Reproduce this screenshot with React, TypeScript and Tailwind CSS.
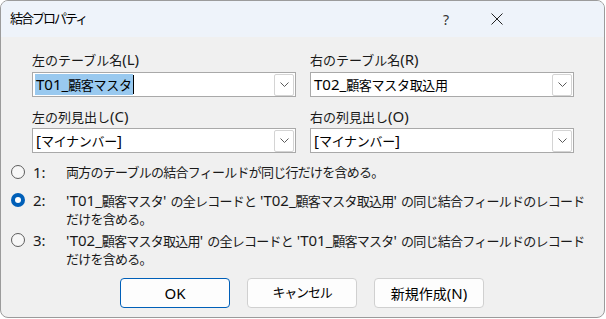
import React from 'react';

const font = { fontFamily: '"Noto Sans", "Noto Sans CJK JP", sans-serif' };

// Latin runs are rendered a bit larger than the Japanese runs, like the Windows UI font pairing
const Mix = ({ text, cjk = '', lat = 'text-[15px]' }: { text: string; cjk?: string; lat?: string }) => (
  <>
    {text.split(/([\x20-\x7e]+)/).map((part, i) =>
      part === '' ? null : /^[\x20-\x7e]+$/.test(part) ? (
        <span key={i} className={`whitespace-pre ${lat}`}>
          {part}
        </span>
      ) : (
        <span key={i} className={cjk}>
          {part}
        </span>
      )
    )}
  </>
);

const Chevron = () => (
  <svg width="9" height="5" viewBox="0 0 9 5" fill="none">
    <path d="M0.5 0.5 L4.5 4.5 L8.5 0.5" stroke="#5a5a5a" strokeWidth="1" />
  </svg>
);

const Combo = ({ value, selected }: { value: string; selected?: boolean }) => (
  <div className="flex h-[25px] items-center border border-[#a9a9a9] bg-white pl-[2px] pr-[1px]">
    <div className="flex flex-1 items-center">
      <span className={`px-[1px] leading-[20px] text-black ${selected ? 'bg-[#99c9ef]' : ''}`}>
        <Mix text={value} cjk="tracking-[-0.3px]" />
      </span>
      {selected && <span className="h-[19px] w-[1px] bg-black" />}
    </div>
    <div className="flex h-[22px] w-[20px] items-center justify-center rounded-[2px] border border-[#d4d4d4] bg-white">
      <Chevron />
    </div>
  </div>
);

const Radio = ({ checked }: { checked?: boolean }) =>
  checked ? (
    <span className="flex h-[14px] w-[14px] items-center justify-center rounded-full bg-[#005fb8]">
      <span className="h-[6px] w-[6px] rounded-full bg-white" />
    </span>
  ) : (
    <span className="h-[14px] w-[14px] rounded-full border border-[#5d5d5d] bg-[#f7f7f7]" />
  );

const Option = ({ n, checked, lines }: { n: string; checked?: boolean; lines: string[] }) => (
  <div className="flex pl-[10px] leading-[18px]">
    <div className="flex h-[18px] w-[22px] items-center">
      <Radio checked={checked} />
    </div>
    <div className="w-[33px] text-[15px]">{n}</div>
    <div className="flex flex-col">
      {lines.map((l) => (
        <span key={l}>
          <Mix text={l} cjk="tracking-[-0.75px]" />
        </span>
      ))}
    </div>
  </div>
);

const Label = ({ text }: { text: string }) => (
  <div className="h-[20px] leading-[20px]">
    <Mix text={text} lat="text-[15px]" />
  </div>
);

export default function App() {
  return (
    <div className="h-[319px] w-[606px] bg-white text-[13px] text-[#1a1a1a]" style={font}>
      <div className="flex h-[318px] w-[605px] flex-col overflow-hidden rounded-[8px] border border-[#9b9b9b] bg-[#f0f0f0]">
        {/* title bar */}
        <div className="flex h-[36px] items-center bg-[#eef3fa] pl-[9px]">
          <span className="flex-1 text-[13px] tracking-[-2px] text-black">結合プロパティ</span>
          <span className="mr-[42px] text-[14px] text-[#333]">?</span>
          <svg width="12" height="12" viewBox="0 0 12 12" className="mr-[101px]">
            <path d="M0.5 0.5 L11.5 11.5 M11.5 0.5 L0.5 11.5" stroke="#222" strokeWidth="1" />
          </svg>
        </div>

        {/* table pickers */}
        <div className="grid grid-cols-2 gap-x-[14px] pl-[31px] pr-[30px] pt-[12px]">
          <div className="flex flex-col">
            <Label text="左のテーブル名(L)" />
            <div className="mt-[3px]">
              <Combo value="T01_顧客マスタ" selected />
            </div>
            <div className="mt-[9px]">
              <Label text="左の列見出し(C)" />
            </div>
            <div className="mt-[2px]">
              <Combo value="[マイナンバー]" />
            </div>
          </div>
          <div className="flex flex-col">
            <Label text="右のテーブル名(R)" />
            <div className="mt-[3px]">
              <Combo value="T02_顧客マスタ取込用" />
            </div>
            <div className="mt-[9px]">
              <Label text="右の列見出し(O)" />
            </div>
            <div className="mt-[2px]">
              <Combo value="[マイナンバー]" />
            </div>
          </div>
        </div>

        {/* join type */}
        <div className="mt-[10px] flex flex-col">
          <Option n="1:" lines={['両方のテーブルの結合フィールドが同じ行だけを含める。']} />
          <div className="mt-[10px]">
            <Option
              n="2:"
              checked
              lines={[
                "'T01_顧客マスタ' の全レコードと 'T02_顧客マスタ取込用' の同じ結合フィールドのレコード",
                'だけを含める。',
              ]}
            />
          </div>
          <div className="mt-[3px]">
            <Option
              n="3:"
              lines={[
                "'T02_顧客マスタ取込用' の全レコードと 'T01_顧客マスタ' の同じ結合フィールドのレコード",
                'だけを含める。',
              ]}
            />
          </div>
        </div>

        {/* buttons */}
        <div className="mt-[10px] flex justify-center gap-[17px] pr-[1px]">
          <button className="h-[30px] w-[110px] rounded-[4px] border border-[#005fb8] bg-[#fdfdfd] text-[15px] text-black">
            OK
          </button>
          <button className="h-[30px] w-[110px] rounded-[4px] border border-[#d0d0d0] bg-[#fdfdfd] text-[13px] tracking-[-1.2px] text-black">
            キャンセル
          </button>
          <button className="h-[30px] w-[110px] rounded-[4px] border border-[#d0d0d0] bg-[#fdfdfd] text-[14px] text-black">
            <Mix text="新規作成(N)" lat="text-[15px]" />
          </button>
        </div>
      </div>
    </div>
  );
}
